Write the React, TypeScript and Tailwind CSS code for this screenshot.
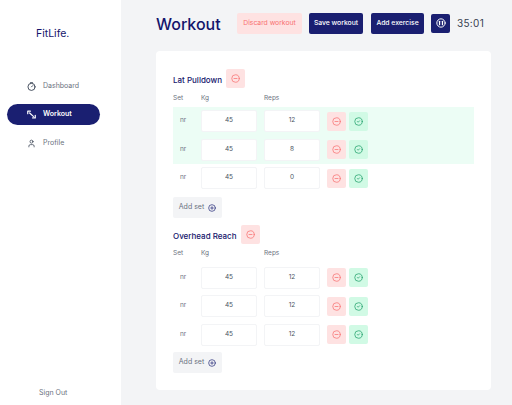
import React from 'react';
import { CircleCheck, CircleMinus, CirclePlus, User } from 'lucide-react';

const font = { fontFamily: 'Inter, sans-serif' };

const DashboardIcon = () => (
  <svg width="9" height="9" viewBox="0 0 24 24" fill="none" stroke="currentColor" strokeWidth="2.4" strokeLinecap="round">
    <circle cx="12" cy="13" r="9.5" />
    <path d="M9 2h6" />
    <path d="M12 13l3.5-3.5" />
  </svg>
);

const WorkoutIcon = () => (
  <svg width="9" height="9" viewBox="0 0 24 24" fill="none" stroke="currentColor" strokeWidth="3.2" strokeLinecap="round" strokeLinejoin="round">
    <path d="M2 10V3h7" />
    <path d="M22 14v7h-7" />
    <path d="M7 8l10 9" />
  </svg>
);

const PauseIcon = () => (
  <svg width="10" height="10" viewBox="0 0 24 24" fill="none" stroke="currentColor" strokeWidth="2.4" strokeLinecap="round">
    <circle cx="12" cy="12" r="10" />
    <path d="M8.5 8v8" strokeWidth="3" />
    <path d="M15.5 8v8" strokeWidth="3" />
  </svg>
);

const MinusButton = () => (
  <button className="flex h-[19px] w-[19px] items-center justify-center rounded-[2px] bg-[#fee2e2] text-[#f87171]">
    <CircleMinus size={9} strokeWidth={2} />
  </button>
);

const CheckButton = () => (
  <button className="flex h-[19px] w-[19px] items-center justify-center rounded-[2px] bg-[#d1fae5] text-[#22a06b]">
    <CircleCheck size={9} strokeWidth={2} />
  </button>
);

const Cell = ({ value }: { value: string }) => (
  <div className="flex h-[22px] w-[56px] items-center justify-center rounded-[2px] border border-[#f3f4f6] bg-white text-[6.5px] text-[#4b5563]">
    {value}
  </div>
);

const SetRow = ({ kg, reps, className }: { kg: string; reps: string; className: string }) => (
  <div className={`flex items-center ${className}`}>
    <span className="w-[28px] pl-[7px] text-[6.5px] text-[#6b7280]">nr</span>
    <Cell value={kg} />
    <div className="w-[7px]" />
    <Cell value={reps} />
    <div className="flex gap-[3px] pl-[7px]">
      <MinusButton />
      <CheckButton />
    </div>
  </div>
);

const ExerciseTitle = ({ name }: { name: string }) => (
  <div className="flex items-center gap-[4px]">
    <h2 className="pt-[3px] text-[8px] font-medium text-[#14146b]">{name}</h2>
    <MinusButton />
  </div>
);

const Columns = () => (
  <div className="flex h-[11px] items-center text-[6.5px] text-[#6b7280]">
    <span className="w-[28px]">Set</span>
    <span className="w-[63px]">Kg</span>
    <span>Reps</span>
  </div>
);

const AddSet = () => (
  <button className="flex h-[21px] w-[49px] items-center justify-center gap-[4px] rounded-[2px] bg-[#f3f4f6] text-[7px] text-[#6b7280]">
    Add set
    <CirclePlus size={8} strokeWidth={2} className="text-[#1a1f71]" />
  </button>
);

const NavItem = ({ icon, label }: { icon: React.ReactNode; label: string }) => (
  <div className="flex h-[20px] items-center gap-[7px] pl-[20px] text-[7px] text-[#6b7280]">
    {icon}
    {label}
  </div>
);

export default function App() {
  return (
    <div style={font} className="flex h-[405px] w-[512px] overflow-hidden bg-[#f3f4f6]">
      <aside className="flex w-[121px] shrink-0 flex-col bg-white">
        <div className="pl-[36px] pt-[26px] text-[10.5px] leading-[16px] text-[#14146b]">FitLife.</div>
        <nav className="mt-[34px] flex flex-col gap-[8px] pl-[7px] pr-[21px]">
          <NavItem icon={<span className="text-[#374151]"><DashboardIcon /></span>} label="Dashboard" />
          <div className="flex h-[21px] items-center gap-[7px] rounded-full bg-[#1a1f71] pl-[20px] text-[7px] font-semibold text-white">
            <WorkoutIcon />
            Workout
          </div>
          <NavItem icon={<User size={9} strokeWidth={2} className="text-[#374151]" />} label="Profile" />
        </nav>
        <div className="mt-auto pb-[7px] pl-[39px] text-[7px] leading-[10px] text-[#6b7280]">Sign Out</div>
      </aside>

      <main className="flex min-w-0 flex-1 flex-col pl-[35px] pr-[21px]">
        <header className="flex h-[51px] items-center pb-[5px]">
          <h1 className="mt-[2px] w-[81px] text-[16px] font-medium text-[#14146b]">Workout</h1>
          <button className="flex h-[21px] w-[65px] items-center justify-center rounded-[2px] bg-[#fee2e2] text-[6.8px] text-[#f87171]">
            Discard workout
          </button>
          <button className="ml-[7px] flex h-[21px] w-[54px] items-center justify-center rounded-[2px] bg-[#1a1f71] text-[6.8px] font-medium text-white">
            Save workout
          </button>
          <button className="ml-[8px] flex h-[21px] w-[53px] items-center justify-center rounded-[2px] bg-[#1a1f71] text-[6.8px] font-medium text-white">
            Add exercise
          </button>
          <button className="ml-[7px] flex h-[19px] w-[19px] items-center justify-center rounded-[2px] bg-[#1a1f71] text-white">
            <PauseIcon />
          </button>
          <span className="ml-[7px] text-[10px] tracking-[0.3px] text-[#374151]">35:01</span>
        </header>

        <section className="flex h-[339px] flex-col rounded-[4px] bg-white px-[17px] pt-[18px]">
          <ExerciseTitle name="Lat Pulldown" />
          <div className="mt-[5px]">
            <Columns />
          </div>
          <div className="mt-[3px] flex flex-col bg-[#ecfdf5]">
            <SetRow kg="45" reps="12" className="h-[28px]" />
            <SetRow kg="45" reps="8" className="h-[29px]" />
          </div>
          <SetRow kg="45" reps="0" className="h-[28px]" />
          <div className="mt-[5px]">
            <AddSet />
          </div>
          <div className="mt-[7px]">
            <ExerciseTitle name="Overhead Reach" />
          </div>
          <div className="mt-[4px]">
            <Columns />
          </div>
          <div className="mt-[4px] flex flex-col">
            <SetRow kg="45" reps="12" className="h-[29px]" />
            <SetRow kg="45" reps="12" className="h-[28px]" />
            <SetRow kg="45" reps="12" className="h-[29px]" />
          </div>
          <div className="mt-[3px]">
            <AddSet />
          </div>
        </section>
      </main>
    </div>
  );
}
